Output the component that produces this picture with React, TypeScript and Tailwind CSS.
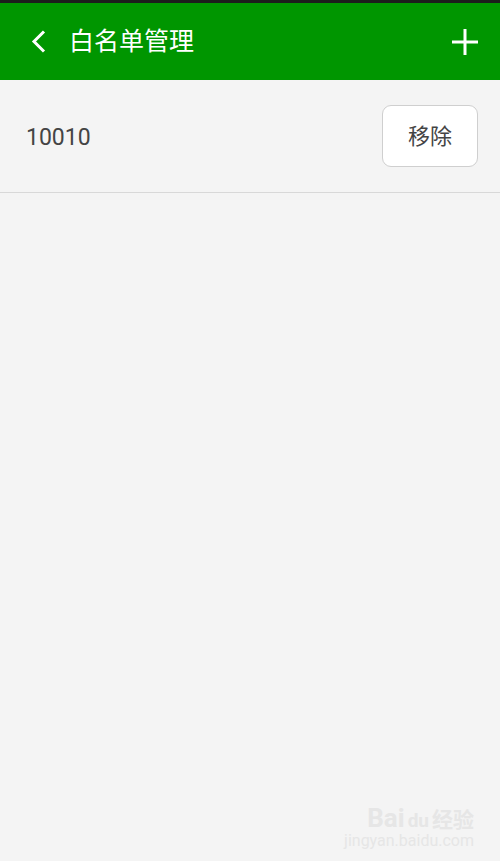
export default function App() {
  return (
    <div className="flex h-[861px] w-[500px] flex-col bg-[#f4f4f4] font-['Roboto','Noto_Sans_CJK_SC',sans-serif]">
      <div className="h-[3px] bg-[#1c1c1c]" />
      <header className="flex h-[77px] items-center bg-[#009600] pl-[31px] pr-[22px] text-white">
        <svg width="16" height="24" viewBox="0 0 16 24" fill="none" className="mr-[22px]">
          <path d="M13 1.5 3 11.5 13 21.5" stroke="white" strokeWidth="3" />
        </svg>
        <h1 className="flex-1 text-[25px] leading-none">白名单管理</h1>
        <svg width="26" height="26" viewBox="0 0 26 26" fill="none">
          <path d="M13 0v26M0 13h26" stroke="white" strokeWidth="3" />
        </svg>
      </header>

      <div className="flex h-[113px] items-center justify-between border-b border-[#d8d8d8] pl-[26px] pr-[22px]">
        <span className="pt-[5px] text-[23px] text-[#444]">10010</span>
        <button
          className="h-[62px] w-[96px] rounded-[9px] border border-[#cfcfcf] bg-white text-[22px] text-[#444]"
          type="button"
        >
          移除
        </button>
      </div>

      <div className="flex flex-1 flex-col items-end justify-end pb-[10px] pr-[26px] text-[#e6e6e6]">
        <div className="flex items-baseline gap-[3px] text-[26px] font-bold leading-none">
          <span>Bai</span>
          <span className="text-[19px]">du</span>
          <span className="text-[21px]">经验</span>
        </div>
        <div className="text-[16px] leading-tight">jingyan.baidu.com</div>
      </div>
    </div>
  );
}
